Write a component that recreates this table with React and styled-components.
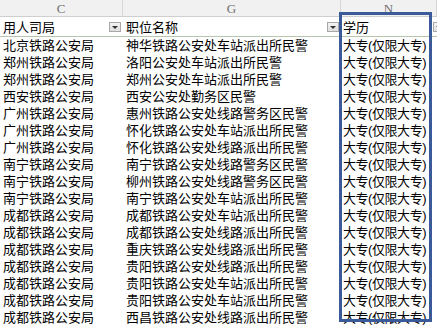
import React from "react";
import styled, { createGlobalStyle } from "styled-components";

const Global = createGlobalStyle`
  html, body { margin: 0; padding: 0; background: #ffffff; }
  body { width: 437px; height: 327px; overflow: hidden; }
`;

const Sheet = styled.div`
  position: relative;
  width: 437px;
  height: 327px;
  overflow: hidden;
  background: #fff;
`;

const Grid = styled.div`
  display: grid;
  grid-template-columns: 123px 218px 96px;
  grid-template-rows: 17px 20px;
  grid-auto-rows: 17px;
  width: 437px;
`;

const ColLetter = styled.div`
  background: #f1f1f1;
  border-right: 1px solid #d6d6d6;
  border-bottom: 1px solid #cfcfcf;
  box-sizing: border-box;
  display: flex;
  align-items: center;
  justify-content: center;
  font-family: "Liberation Serif", serif;
  font-size: 13px;
  color: #707070;
  line-height: 17px;
  overflow: hidden;
`;

const HeadCell = styled.div`
  display: flex;
  align-items: center;
  justify-content: space-between;
  box-sizing: border-box;
  padding: 1px 2px 0 ${(p) => p.$pad || 3}px;
  border-bottom: 1px solid #b9c6ae;
  font-family: "Liberation Sans", "Noto Sans CJK SC", sans-serif;
  font-size: 13px;
  line-height: 17px;
  color: #000;
  white-space: nowrap;
  overflow: hidden;
`;

const Drop = styled.span`
  width: 12px;
  height: 10px;
  box-sizing: border-box;
  border: 1px solid #a8a8a8;
  background: linear-gradient(#f4f4f4, #dedede);
  display: flex;
  align-items: center;
  justify-content: center;
  flex: none;
  margin-right: ${(p) => p.$shift || 0}px;
  &::after {
    content: "";
    border-left: 3px solid transparent;
    border-right: 3px solid transparent;
    border-top: 3px solid #333;
  }
`;

const Cell = styled.div`
  box-sizing: border-box;
  padding-left: ${(p) => p.$pad || 3}px;
  font-family: "Liberation Sans", "Noto Sans CJK SC", sans-serif;
  font-size: 13px;
  line-height: 17px;
  height: 17px;
  letter-spacing: ${(p) => p.$tight || 0}px;
  color: #000;
  white-space: nowrap;
  overflow: hidden;
`;

const Highlight = styled.div`
  position: absolute;
  left: 339px;
  top: 12px;
  width: 93px;
  height: 310px;
  box-sizing: border-box;
  border: 3px solid #3b5a99;
  pointer-events: none;
`;

const bureaus = [
  "北京铁路公安局",
  "郑州铁路公安局",
  "郑州铁路公安局",
  "西安铁路公安局",
  "广州铁路公安局",
  "广州铁路公安局",
  "广州铁路公安局",
  "南宁铁路公安局",
  "南宁铁路公安局",
  "南宁铁路公安局",
  "成都铁路公安局",
  "成都铁路公安局",
  "成都铁路公安局",
  "成都铁路公安局",
  "成都铁路公安局",
  "成都铁路公安局",
  "成都铁路公安局",
];

const posts = [
  "神华铁路公安处车站派出所民警",
  "洛阳公安处车站派出所民警",
  "郑州公安处车站派出所民警",
  "西安公安处勤务区民警",
  "惠州铁路公安处线路警务区民警",
  "怀化铁路公安处车站派出所民警",
  "怀化铁路公安处线路派出所民警",
  "南宁铁路公安处线路警务区民警",
  "柳州铁路公安处线路警务区民警",
  "南宁铁路公安处车站派出所民警",
  "成都铁路公安处车站派出所民警",
  "成都铁路公安处线路派出所民警",
  "重庆铁路公安处线路派出所民警",
  "贵阳铁路公安处线路派出所民警",
  "贵阳铁路公安处车站派出所民警",
  "贵阳铁路公安处车站派出所民警",
  "西昌铁路公安处线路派出所民警",
];

export default function App() {
  return (
    <>
      <Global />
      <Sheet>
        <Grid>
          <ColLetter>C</ColLetter>
          <ColLetter>G</ColLetter>
          <ColLetter>N</ColLetter>
          <HeadCell>
            <span>用人司局</span>
            <Drop />
          </HeadCell>
          <HeadCell>
            <span>职位名称</span>
            <Drop />
          </HeadCell>
          <HeadCell $pad={2}>
            <span>学历</span>
            <Drop $shift={-10} />
          </HeadCell>
          {bureaus.map((b, i) => (
            <React.Fragment key={i}>
              <Cell>{b}</Cell>
              <Cell>{posts[i]}</Cell>
              <Cell $pad={2} $tight={-0.45}>大专(仅限大专)</Cell>
            </React.Fragment>
          ))}
        </Grid>
        <Highlight />
      </Sheet>
    </>
  );
}
